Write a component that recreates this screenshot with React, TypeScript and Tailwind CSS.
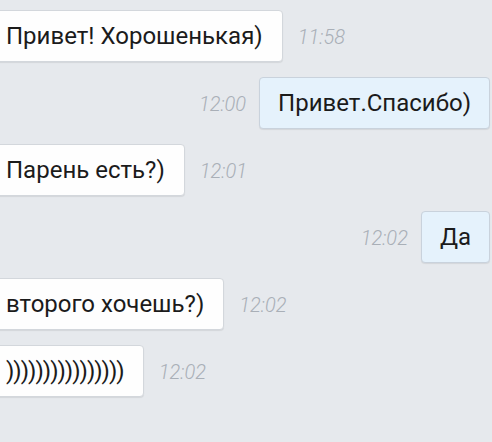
const messages = [
  { id: 1, out: false, text: "Привет! Хорошенькая)", time: "11:58" },
  { id: 2, out: true, text: "Привет.Спасибо)", time: "12:00" },
  { id: 3, out: false, text: "Парень есть?)", time: "12:01" },
  { id: 4, out: true, text: "Да", time: "12:02" },
  { id: 5, out: false, text: "второго хочешь?)", time: "12:02" },
  { id: 6, out: false, text: "))))))))))))))))", time: "12:02", tight: true },
];

function Time({ value }: { value: string }) {
  return (
    <span className="text-[20px] font-light italic leading-none text-[#a9afb7]">
      {value}
    </span>
  );
}

function Bubble({ text, out, tight }: { text: string; out: boolean; tight?: boolean }) {
  return (
    <div
      className={
        out
          ? "flex h-[52px] items-center rounded-[4px] border border-[#c9d2dc] bg-[#e5f2fc] px-[18px] shadow-[0_1px_1px_rgba(0,0,0,0.08)]"
          : "-ml-[14px] flex h-[52px] items-center rounded-[4px] border border-[#d3d7dc] bg-[#fefefe] px-[19px] shadow-[0_1px_1px_rgba(0,0,0,0.08)]"
      }
    >
      <span
        className={
          tight
            ? "whitespace-nowrap text-[24px] leading-none tracking-[-1px] text-[#1b1b1b]"
            : "whitespace-nowrap text-[24px] leading-none text-[#1b1b1b]"
        }
      >
        {text}
      </span>
    </div>
  );
}

export default function App() {
  return (
    <div
      className="flex h-[442px] w-[492px] flex-col gap-[15px] overflow-hidden bg-[#e6e9ed] pr-[2px] pt-[10px]"
      style={{ fontFamily: "Roboto, 'Noto Sans', sans-serif" }}
    >
      {messages.map((m) =>
        m.out ? (
          <div key={m.id} className="flex items-baseline justify-end gap-[13px]">
            <Time value={m.time} />
            <Bubble text={m.text} out />
          </div>
        ) : (
          <div key={m.id} className="flex items-baseline gap-[15px]">
            <Bubble text={m.text} out={false} tight={m.tight} />
            <Time value={m.time} />
          </div>
        )
      )}
    </div>
  );
}
